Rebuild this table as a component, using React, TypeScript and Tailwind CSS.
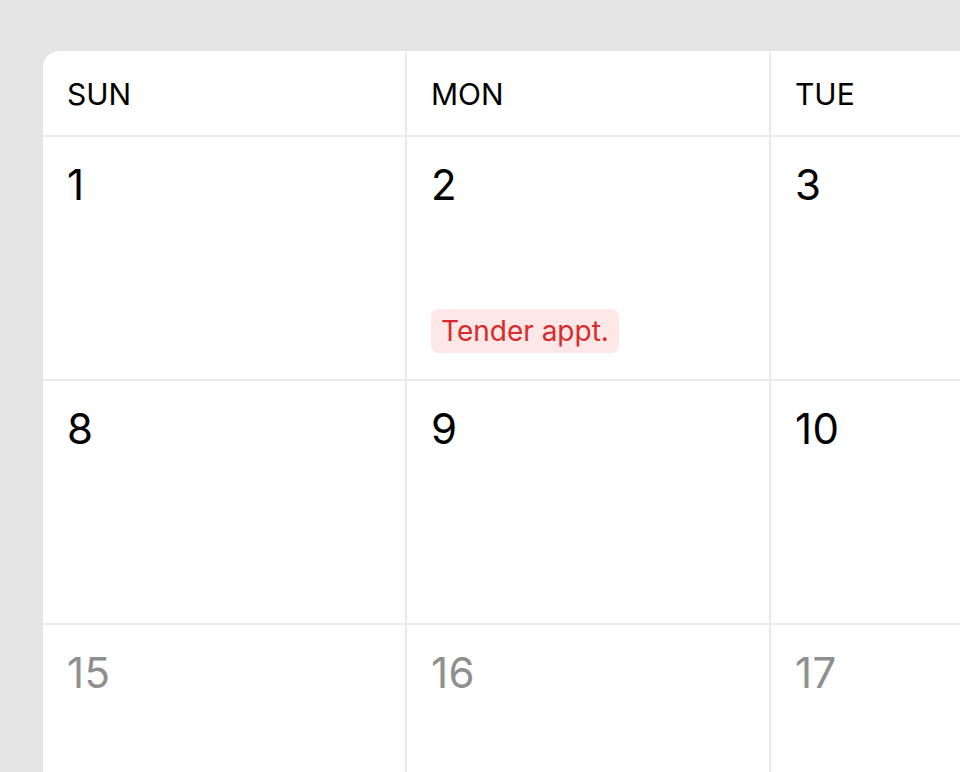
import React from 'react';

const days = ['SUN', 'MON', 'TUE'];

const weeks: { day: number; muted?: boolean; events?: string[] }[][] = [
  [{ day: 1 }, { day: 2, events: ['Tender appt.'] }, { day: 3 }],
  [{ day: 8 }, { day: 9 }, { day: 10 }],
  [
    { day: 15, muted: true },
    { day: 16, muted: true },
    { day: 17, muted: true },
  ],
];

const App: React.FC = () => {
  return (
    <div
      className="w-[960px] h-[772px] overflow-hidden bg-[#e4e4e4] pl-[43px] pt-[51px]"
      style={{ fontFamily: 'Inter, "Noto Sans", sans-serif' }}
    >
      <div className="w-max bg-white rounded-tl-[16px] overflow-hidden">
        {/* Weekday header */}
        <div className="flex border-b-2 border-[#ebebeb]">
          {days.map((d, i) => (
            <div
              key={d}
              className={`h-[84px] flex items-center px-6 pt-[2px] text-[30px] leading-[36px] text-black ${
                i === 0 ? 'w-[362px]' : 'w-[364px] border-l-2 border-[#ebebeb]'
              }`}
            >
              {d}
            </div>
          ))}
        </div>

        {/* Weeks */}
        {weeks.map((week, w) => (
          <div key={w} className="flex border-b-2 border-[#ebebeb]">
            {week.map((cell, i) => (
              <div
                key={cell.day}
                className={`h-[242px] flex flex-col px-6 pt-6 pb-[26px] ${
                  i === 0 ? 'w-[362px]' : 'w-[364px] border-l-2 border-[#ebebeb]'
                }`}
              >
                <div
                  className={`text-[42px] leading-[48px] tracking-[0.5px] ${
                    cell.muted ? 'text-[#8f8f8f]' : 'text-black'
                  }`}
                >
                  {cell.day}
                </div>
                {cell.events && (
                  <div className="mt-auto flex flex-col gap-2">
                    {cell.events.map((e) => (
                      <span
                        key={e}
                        className="self-start rounded-[8px] bg-[#fde7e7] px-[10px] py-1 text-[28px] leading-[36px] text-[#d92b2b]"
                      >
                        {e}
                      </span>
                    ))}
                  </div>
                )}
              </div>
            ))}
          </div>
        ))}
      </div>
    </div>
  );
};

export default App;
